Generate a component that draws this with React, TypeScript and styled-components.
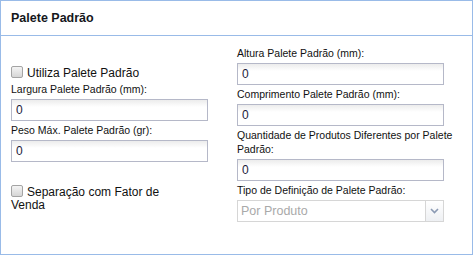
import { createGlobalStyle } from "styled-components";
import styled from "styled-components";

const GlobalStyle = createGlobalStyle`
  body {
    margin: 0;
    background: #ffffff;
    font-family: "Liberation Sans", Arial, sans-serif;
  }
`;

const Panel = styled.section`
  width: 473px;
  height: 255px;
  box-sizing: border-box;
  border: 1px solid #99bbe8;
  background: #ffffff;
  display: flex;
  flex-direction: column;
`;

const Header = styled.header`
  height: 34px;
  flex: none;
  border-bottom: 1px solid #99bbe8;
  padding-left: 10px;
  display: flex;
  align-items: center;
  font-size: 12.5px;
  font-weight: bold;
  color: #15171c;
`;

const Body = styled.div`
  display: flex;
  gap: 29px;
  padding: 0 10px;
`;

const Column = styled.div<{ $width: number; $top: number }>`
  width: ${(p) => p.$width}px;
  padding-top: ${(p) => p.$top}px;
  display: flex;
  flex-direction: column;
`;

const FieldLabel = styled.label`
  display: block;
  font-size: 10.5px;
  line-height: 14px;
  margin: 2px 0 3px;
  color: #111111;
`;

const TextInput = styled.input<{ $width: number }>`
  box-sizing: border-box;
  width: ${(p) => p.$width}px;
  height: 22px;
  margin: 0;
  border: 1px solid #b5b8c8;
  padding: 0 4px;
  font-family: "Liberation Sans", Arial, sans-serif;
  font-size: 12px;
  color: #1c1a3a;
  background: linear-gradient(#ececec, #ffffff 7px);
  outline: none;
`;

const CheckRow = styled.label<{ $gap: number }>`
  display: block;
  width: 178px;
  margin-top: ${(p) => p.$gap}px;
  font-size: 12px;
  line-height: 13px;
  color: #111111;
`;

const Box = styled.input`
  appearance: none;
  display: inline-block;
  width: 12px;
  height: 12px;
  margin: 0 4px 0 0;
  vertical-align: -1px;
  box-sizing: border-box;
  border: 1px solid #a4a4a4;
  border-radius: 2px;
  background: linear-gradient(#f4f4f4, #d6d6d6);
`;

const Combo = styled.div`
  box-sizing: border-box;
  width: 207px;
  height: 22px;
  display: flex;
  border: 1px solid #d6d6d6;
  background: #ffffff;
`;

const ComboText = styled.div`
  flex: 1;
  padding-left: 3px;
  display: flex;
  align-items: center;
  font-size: 12.5px;
  color: #a9a9a9;
`;

const Trigger = styled.div`
  width: 17px;
  border-left: 1px solid #d6d6d6;
  background: linear-gradient(#ffffff, #eef0f3);
  display: flex;
  align-items: center;
  justify-content: center;
`;

const Chevron = () => (
  <svg width="9" height="6" viewBox="0 0 9 6">
    <path d="M1 1 L4.5 4.5 L8 1" fill="none" stroke="#8b9ab3" strokeWidth="1.6" />
  </svg>
);

type Field = { label: string; value: string };

const leftFields: Field[] = [
  { label: "Largura Palete Padrão (mm):", value: "0" },
  { label: "Peso Máx. Palete Padrão (gr):", value: "0" },
];

const rightFields: Field[] = [
  { label: "Altura Palete Padrão (mm):", value: "0" },
  { label: "Comprimento Palete Padrão (mm):", value: "0" },
  { label: "Quantidade de Produtos Diferentes por Palete Padrão:", value: "0" },
];

export default function App() {
  return (
    <>
      <GlobalStyle />
      <Panel>
        <Header>Palete Padrão</Header>
        <Body>
          <Column $width={197} $top={30}>
            <CheckRow $gap={0}>
              <Box type="checkbox" />
              Utiliza Palete Padrão
            </CheckRow>
            {leftFields.map((f) => (
              <div key={f.label}>
                <FieldLabel>{f.label}</FieldLabel>
                <TextInput $width={197} defaultValue={f.value} readOnly />
              </div>
            ))}
            <CheckRow $gap={23}>
              <Box type="checkbox" />
              Separação com Fator de Venda
            </CheckRow>
          </Column>
          <Column $width={224} $top={8}>
            {rightFields.map((f) => (
              <div key={f.label}>
                <FieldLabel>{f.label}</FieldLabel>
                <TextInput $width={207} defaultValue={f.value} readOnly />
              </div>
            ))}
            <FieldLabel>Tipo de Definição de Palete Padrão:</FieldLabel>
            <Combo>
              <ComboText>Por Produto</ComboText>
              <Trigger>
                <Chevron />
              </Trigger>
            </Combo>
          </Column>
        </Body>
      </Panel>
    </>
  );
}
